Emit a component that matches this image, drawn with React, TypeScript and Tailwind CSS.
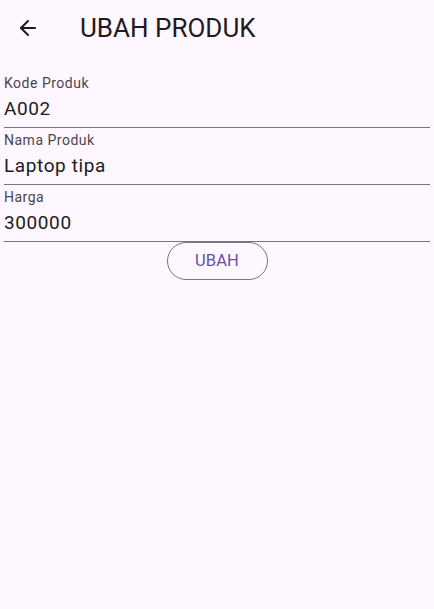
import { ArrowLeft } from "lucide-react"

const fields = [
  { label: "Kode Produk", value: "A002" },
  { label: "Nama Produk", value: "Laptop tipa" },
  { label: "Harga", value: "300000" },
]

export default function App() {
  return (
    <div className="w-[434px] h-[609px] bg-[#fef7ff] text-[#1d1b20] font-['Roboto',sans-serif]">
      {/* App bar */}
      <div className="h-14 flex items-center">
        <div className="w-14 h-14 flex items-center justify-center">
          <ArrowLeft className="w-6 h-6" strokeWidth={2} />
        </div>
        <h1 className="ml-6 text-[26px] leading-8">UBAH PRODUK</h1>
      </div>

      {/* Form */}
      <div className="px-1 pt-[15px]">
        {fields.map((f) => (
          <div key={f.label} className="h-[57px] border-b border-[#79747e] flex flex-col">
            <div className="text-[14px] leading-4 tracking-[0.5px] text-[#49454f] mt-[4px]">{f.label}</div>
            <div className="text-[19px] leading-6 tracking-[0.6px] mt-[6px]">{f.value}</div>
          </div>
        ))}
        <div className="flex justify-center">
          <button className="w-[101px] h-[38px] rounded-full border border-[#79747e] text-[#6750a4] text-[16.5px] tracking-[0.1px]">
            UBAH
          </button>
        </div>
      </div>
    </div>
  )
}
